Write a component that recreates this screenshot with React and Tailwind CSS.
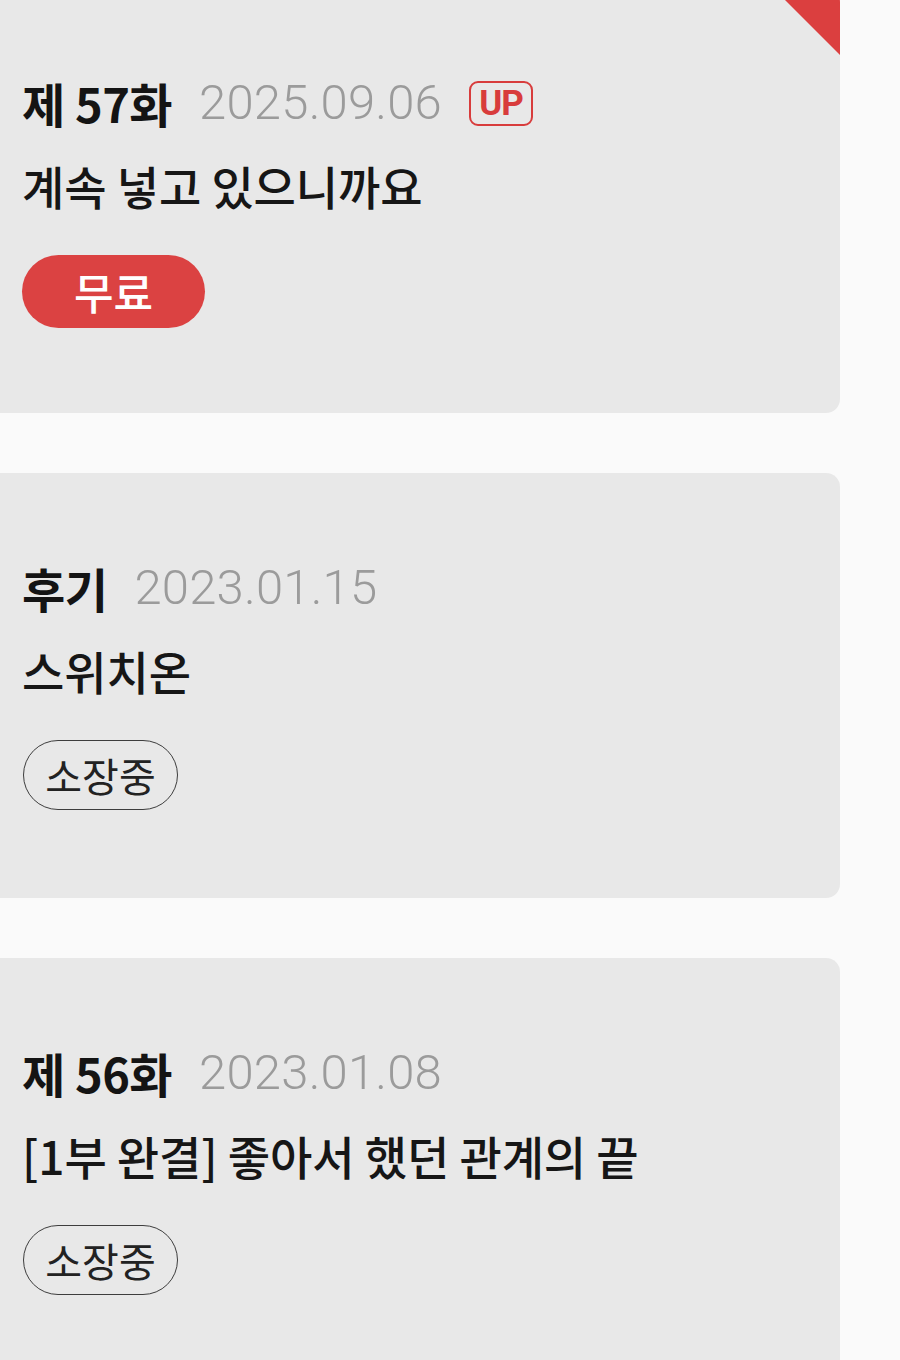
import React from "react";

const episodes = [
  { label: "제 57화", date: "2025.09.06", isNew: true, title: "계속 넣고 있으니까요", free: true },
  { label: "후기", date: "2023.01.15", isNew: false, title: "스위치온", free: false },
  { label: "제 56화", date: "2023.01.08", isNew: false, title: "[1부 완결] 좋아서 했던 관계의 끝", free: false },
];

const kr = { fontFamily: '"Noto Sans CJK KR", "Noto Sans", sans-serif' };

function EpisodeCard({ ep }) {
  return (
    <div className="relative h-[425px] w-[840px] overflow-hidden rounded-r-[14px] bg-[#e8e8e8] pl-[22px] pt-[87px]">
      {ep.isNew && (
        <svg className="absolute right-0 top-0" width="67" height="67" viewBox="0 0 67 67">
          <polygon points="0,0 67,0 67,67" fill="#db3f3f" />
        </svg>
      )}

      {/* heading: episode no + date */}
      <div className="flex h-[56px] items-center">
        <span className="text-[47px] font-bold tracking-[-0.5px] text-[#141414]" style={kr}>
          {ep.label}
        </span>
        <span
          className="ml-[27px] text-[49px] font-light tracking-[0.2px] text-[#9b9b9b]"
          style={{ fontFamily: "Roboto, sans-serif" }}
        >
          {ep.date}
        </span>
        {ep.isNew && (
          <span
            className="ml-[27px] flex h-[45px] w-[64px] items-center justify-center rounded-[9px] border-[2.5px] border-[#d83c3c] text-[35px] font-bold leading-none tracking-[-1px] text-[#d83c3c]"
            style={{ fontFamily: "Roboto, sans-serif" }}
          >
            UP
          </span>
        )}
      </div>

      {/* title */}
      <div
        className="mt-[26px] h-[56px] text-[46px] font-medium leading-[56px] tracking-[-0.1px] text-[#161616]"
        style={kr}
      >
        {ep.title}
      </div>

      {/* status */}
      <div className="mt-[42px]">
        {ep.free ? (
          <span
            className="flex h-[73px] w-[183px] items-center justify-center rounded-full bg-[#db4242] text-[43px] font-medium text-white"
            style={kr}
          >
            무료
          </span>
        ) : (
          <span
            className="ml-px flex h-[70px] w-[155px] items-center justify-center rounded-full border-[1.5px] border-[#3d3d3d] text-[40px] text-[#222]"
            style={kr}
          >
            소장중
          </span>
        )}
      </div>
    </div>
  );
}

export default function App() {
  return (
    <div className="min-h-[1360px] overflow-hidden bg-[#fafafa]">
      <div className="-mt-[12px] flex flex-col gap-[60px]">
        {episodes.map((ep) => (
          <EpisodeCard key={ep.date} ep={ep} />
        ))}
      </div>
    </div>
  );
}
